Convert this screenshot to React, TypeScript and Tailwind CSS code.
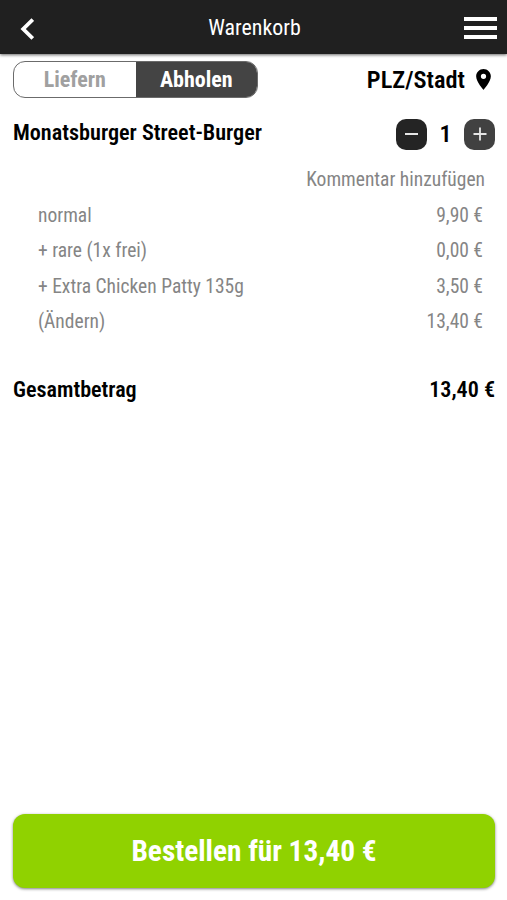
import { useState } from 'react';

interface CartLine {
  label: string;
  price: string;
}

const lines: CartLine[] = [
  { label: 'normal', price: '9,90 €' },
  { label: '+ rare (1x frei)', price: '0,00 €' },
  { label: '+ Extra Chicken Patty 135g', price: '3,50 €' },
  { label: '(Ändern)', price: '13,40 €' },
];

function Header() {
  return (
    <header className="flex h-[54px] flex-shrink-0 items-center justify-between bg-[#202020] pl-5 pr-[10px] text-white shadow-[0_1px_3px_rgba(0,0,0,0.6)]">
      <button className="w-[25px]" aria-label="Zurück">
        <svg viewBox="0 0 14 22" className="mt-[3px] h-[22px] w-[14px]" fill="none" stroke="currentColor" strokeWidth="3.8">
          <path d="M12.8 1.5 3.2 11l9.6 9.5" />
        </svg>
      </button>
      <h1 className="pt-[3px] text-[21.9px] font-normal">Warenkorb</h1>
      <button className="flex w-[33px] flex-col gap-[5px] pt-[2px]" aria-label="Menü">
        <span className="h-1 w-full bg-white" />
        <span className="h-1 w-full bg-white" />
        <span className="h-1 w-full bg-white" />
      </button>
    </header>
  );
}

function ModeToggle() {
  const [mode, setMode] = useState('Abholen');

  return (
    <div className="flex h-[37px] w-[245px] overflow-hidden rounded-[12px] border border-[#6b6b6b] text-[22px] font-bold">
      {['Liefern', 'Abholen'].map((m) => (
        <button
          key={m}
          onClick={() => setMode(m)}
          className={`flex-1 pt-0.5 leading-none ${mode === m ? 'bg-[#444444] text-white' : 'text-[#a0a0a0]'}`}
        >
          {m}
        </button>
      ))}
    </div>
  );
}

export default function App() {
  const [count, setCount] = useState(1);

  return (
    <div className="flex h-screen flex-col bg-white font-['Roboto_Condensed','Roboto',sans-serif] text-black [font-stretch:75%]">
      <Header />

      <main className="flex flex-1 flex-col px-3 pl-[13px]">
        {/* Delivery mode and location */}
        <div className="mt-[6px] flex h-[38px] items-center justify-between">
          <ModeToggle />
          <div className="flex items-center gap-[11px] pr-1 text-[24.4px] font-semibold">
            <span className="pt-0.5">PLZ/Stadt</span>
            <svg viewBox="5 2 14 20" className="h-[21px] w-[15px]" fill="currentColor">
              <path d="M12 2C8.13 2 5 5.13 5 9c0 5.25 7 13 7 13s7-7.75 7-13c0-3.87-3.13-7-7-7zm0 9.5a2.5 2.5 0 1 1 0-5 2.5 2.5 0 0 1 0 5z" />
            </svg>
          </div>
        </div>

        {/* Item */}
        <div className="mt-[20px] flex h-[32px] items-center justify-between">
          <h2 className="pb-[3px] text-[22.2px] font-semibold">Monatsburger Street-Burger</h2>
          <div className="flex items-center">
            <button
              onClick={() => setCount(Math.max(0, count - 1))}
              className="flex h-[31px] w-[31px] items-center justify-center rounded-[10px] bg-[#242424]"
              aria-label="Weniger"
            >
              <span className="h-0.5 w-[13px] bg-[#e6e6e6]" />
            </button>
            <span className="w-[37px] text-center text-[24px] font-semibold">{count}</span>
            <button
              onClick={() => setCount(count + 1)}
              className="flex h-[31px] w-[31px] items-center justify-center rounded-[10px] bg-[#414141] text-[#e6e6e6]"
              aria-label="Mehr"
            >
              <svg viewBox="0 0 14 14" className="h-[14px] w-[14px]" stroke="currentColor" strokeWidth="1.8">
                <path d="M.5 7h13M7 .5v13" />
              </svg>
            </button>
          </div>
        </div>

        <div className="mt-[13px] h-[35px] pr-[10px] text-right text-[19.5px] leading-[34px] text-[#858585]">
          Kommentar hinzufügen
        </div>
        <ul className="pl-[25px] pr-3 text-[19.5px] leading-[35.4px] text-[#858585]">
          {lines.map((line) => (
            <li key={line.label} className="flex justify-between">
              <span>{line.label}</span>
              <span>{line.price}</span>
            </li>
          ))}
        </ul>

        <div className="mt-[31px] flex justify-between text-[22.1px] font-semibold leading-[36px]">
          <span>Gesamtbetrag</span>
          <span>13,40 €</span>
        </div>

        <button className="mb-3 mt-auto h-[74px] rounded-[12px] bg-[#90d200] pt-px text-[29.3px] font-bold text-white shadow-[0_1px_3px_rgba(0,0,0,0.5)]">
          Bestellen für 13,40 €
        </button>
      </main>
    </div>
  );
}
